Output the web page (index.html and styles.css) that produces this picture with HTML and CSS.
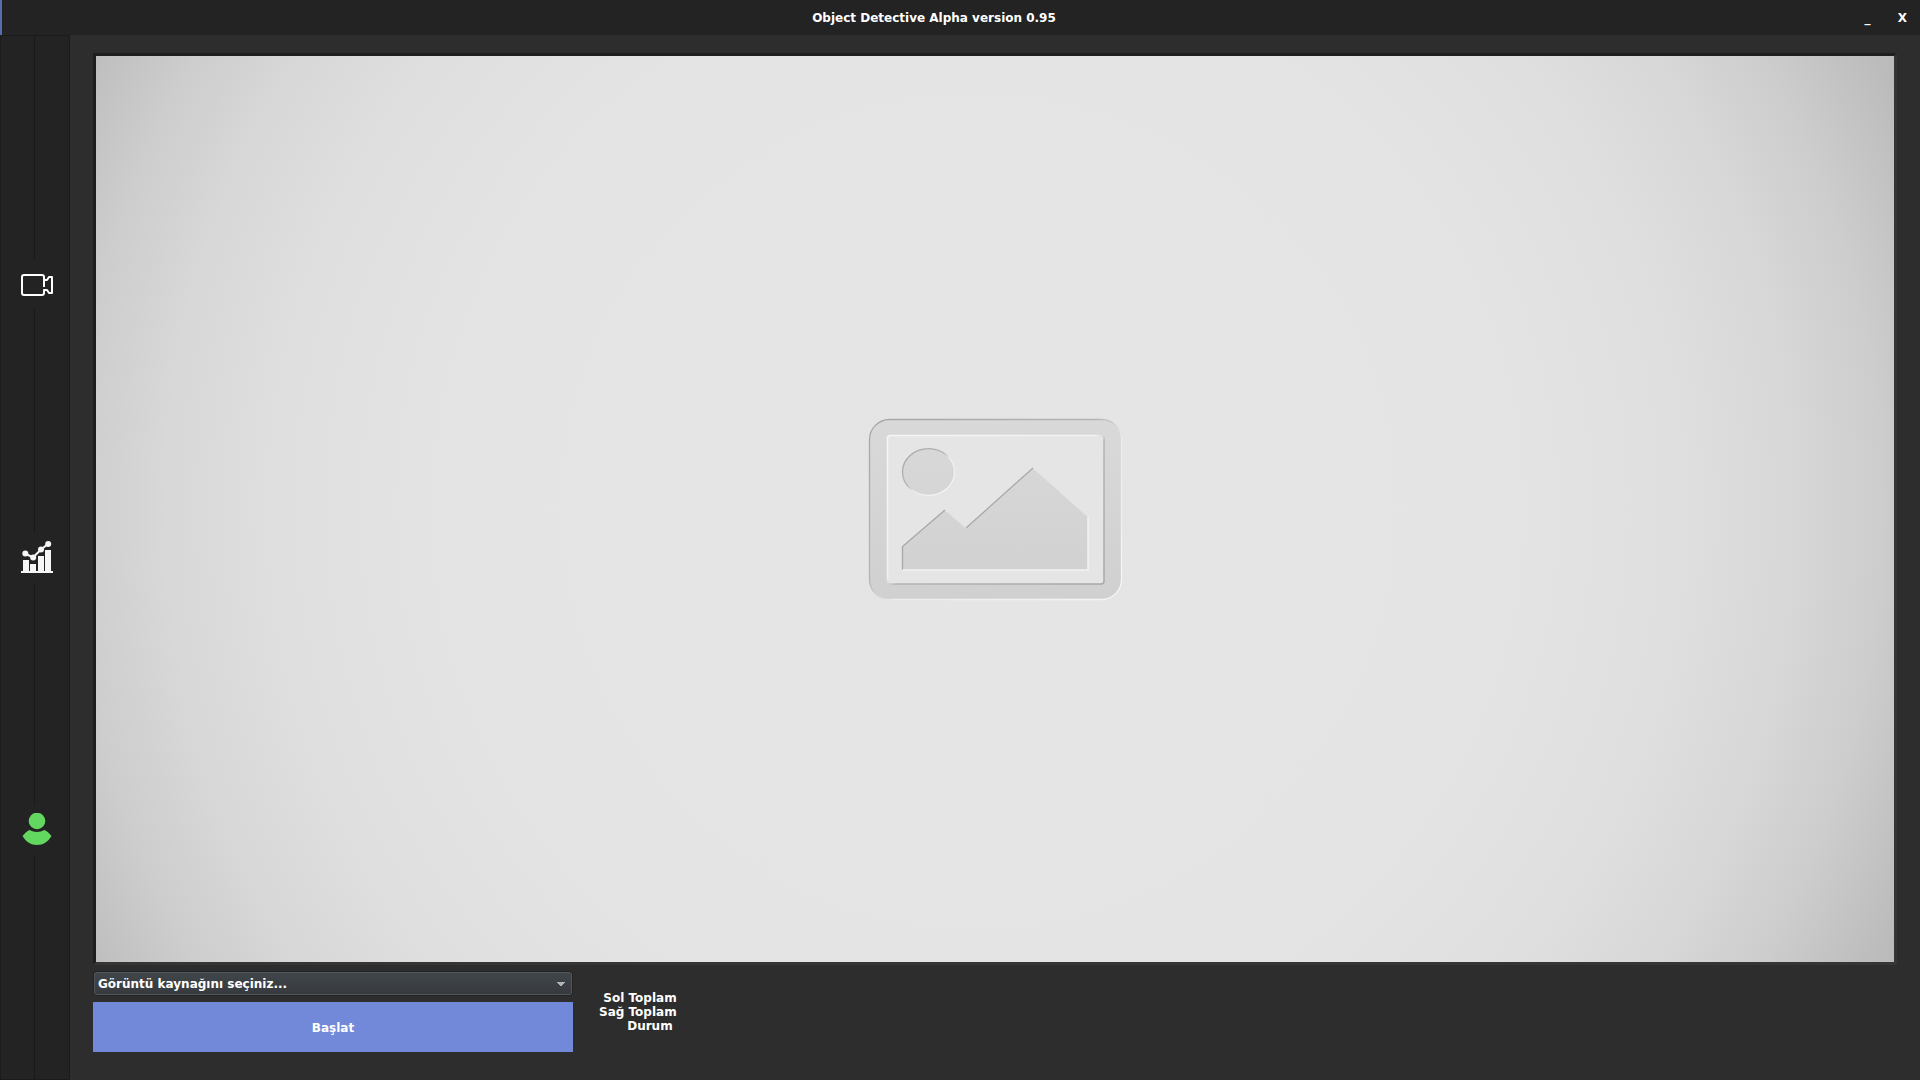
FILE: index.html
```html
<!DOCTYPE html>
<html lang="tr">
<head>
<meta charset="utf-8">
<title>Object Detective</title>
<link rel="stylesheet" href="styles.css">
</head>
<body>
<div class="window">
  <header class="titlebar">
    <h1 class="title">Object Detective Alpha version 0.95</h1>
    <button class="winbtn" type="button">_</button>
    <button class="winbtn" type="button">X</button>
  </header>
  <div class="body">
    <nav class="sidebar">
      <span class="line"></span>
      <button class="nav" type="button" aria-label="Kamera">
        <svg width="36" height="36" viewBox="0 -3 36 36" fill="none" stroke="#fff" stroke-width="2" stroke-linejoin="round">
          <path d="M25 12V8a2 2 0 0 0-2-2H5a2 2 0 0 0-2 2v16a2 2 0 0 0 2 2h18a2 2 0 0 0 2-2v-3h3l2 3h3V8h-3l-2 3h-3v7"/>
        </svg>
      </button>
      <span class="line"></span>
      <button class="nav" type="button" aria-label="İstatistik">
        <svg width="36" height="36" viewBox="0 1 36 36" fill="#f6f6f6">
          <path d="M2 32h32v2H2zM4 21h6v12H4zM11 25h6v8h-6zM19 17h6v16h-6zM26 11h6v22h-6z"/>
          <path d="M6 14.500l8 4 8-8 7-5.500" fill="none" stroke="#f6f6f6" stroke-width="2"/>
          <circle cx="6.300" cy="14.500" r="3"/><circle cx="14.200" cy="18.500" r="3"/><circle cx="22" cy="10.500" r="3"/><circle cx="29.200" cy="5" r="3"/>
        </svg>
      </button>
      <span class="line"></span>
      <button class="nav" type="button" aria-label="Kullanıcı">
        <svg width="36" height="36" viewBox="0 2 36 36" fill="#63d860">
          <circle cx="18" cy="10" r="8.300"/>
          <path d="M3.500 25C6 22 8 20 10.500 19Q18 23 25.500 19C28 20 30 22 32.500 25C29 31 24 34 18 34S7 31 3.500 25z"/>
        </svg>
      </button>
      <span class="line"></span>
    </nav>
    <main class="content">
      <div class="preview">
        <svg class="placeholder" width="256" height="184" viewBox="0 -1 256 184">
          <defs>
            <linearGradient id="fill" gradientUnits="userSpaceOnUse" x1="0" y1="0" x2="0" y2="184"><stop offset="0" stop-color="#d9d9d9"/><stop offset="1" stop-color="#d0d0d0"/></linearGradient>
            <linearGradient id="rim" x1="0" y1="0" x2="1" y2="1"><stop offset="0" stop-color="#a6a6a6"/><stop offset=".45" stop-color="#b4b4b4"/><stop offset=".55" stop-color="#ececec"/><stop offset="1" stop-color="#f6f6f6"/></linearGradient>
            <linearGradient id="rimIn" x1="0" y1="0" x2="1" y2="1"><stop offset="0" stop-color="#f6f6f6"/><stop offset=".48" stop-color="#f2f2f2"/><stop offset=".52" stop-color="#b4b4b4"/><stop offset="1" stop-color="#a8a8a8"/></linearGradient>
          </defs>
          <rect x="2.500" y="1.500" width="252" height="180" rx="20" fill="url(#fill)" stroke="url(#rim)" stroke-width="1.300"/>
          <rect x="20.500" y="17.500" width="216.500" height="148.500" rx="3" fill="#e5e5e5" stroke="url(#rimIn)" stroke-width="1.500"/>
          <ellipse cx="61.500" cy="54" rx="26" ry="23.300" fill="url(#fill)" stroke="url(#rim)" stroke-width="1.300"/>
          <path d="M35.500 152V128.500L78 92l21 18 67-60 55 49v53z" fill="url(#fill)"/>
          <path d="M35.500 152V128.500L78 92M99 110l67-60" fill="none" stroke="#a8a8a8" stroke-width="1.300"/>
          <path d="M78 92l21 18M166 50l55 49" fill="none" stroke="#e2e2e2"/>
          <path d="M35.500 152h185.500V99" fill="none" stroke="#f2f2f2" stroke-width="1.500"/>
        </svg>
      </div>
      <div class="controls">
        <div class="source">
          <select class="combo" aria-label="Görüntü kaynağı"><option>Görüntü kaynağını seçiniz...</option></select>
          <button class="start" type="button">Başlat</button>
        </div>
        <div class="totals">
          <span>Sol Toplam</span>
          <span>Sağ Toplam</span>
          <span class="status">Durum</span>
        </div>
      </div>
    </main>
  </div>
</div>
</body>
</html>
```
FILE: styles.css
```css
* { box-sizing: border-box; }
body {
  margin: 0;
  background: #2d2d2d;
  color: #fff;
  font: bold 12px/14px "DejaVu Sans", sans-serif;
}
button, select { font: inherit; color: inherit; border: 0; padding: 0; margin: 0; }
.window { display: flex; flex-direction: column; min-height: 100vh; }
.titlebar {
  display: flex;
  align-items: stretch;
  height: 35px;
  background: #232323;
  border-left: 2px solid #5a6cb0;
}
.title { flex: 1; margin: 0; padding-left: 16px; font-size: 12px; line-height: 37px; text-align: center; }
.winbtn { width: 35px; background: transparent; }
.body { flex: 1; display: flex; }
.sidebar {
  width: 70px;
  display: flex;
  flex-direction: column;
  background: #232323;
  border: 1px solid #1b1b1b;
}
.line { flex: 1; width: 34px; border-right: 1px solid #191919; }
.nav { display: flex; align-items: center; justify-content: center; height: 50px; padding-left: 4px; background: transparent; }
.content { flex: 1; display: flex; flex-direction: column; padding: 18px 23px 28px; }
.preview {
  flex: 1;
  display: flex;
  align-items: center;
  justify-content: center;
  border: 3px solid;
  border-color: #1e1e1e #353535 #353535 #1e1e1e;
  background: radial-gradient(circle at 49% 50%, #e5e5e5 0, #e4e4e4 520px, #e0e0e0 680px, #d8d8d8 810px, #cdcdcd 905px, #bbbbbb 1010px);
}
.controls { display: flex; gap: 26px; padding-top: 7px; }
.source { width: 480px; display: flex; flex-direction: column; gap: 7px; }
.combo {
  appearance: none;
  height: 23px;
  margin: 0 1px;
  padding: 0 3px;
  border: 1px solid #51565a;
  border-radius: 2px;
  outline: 1px solid #232323;
  background: conic-gradient(from -45deg at 50% 100%, #b4b4b4 90deg, transparent 0) right 6px top 9px / 8px 4px no-repeat, linear-gradient(#40464a, #37393d);
}
.start { height: 50px; padding-top: 2px; background: #7289da; }
.totals { display: flex; flex-direction: column; align-items: flex-end; padding-top: 19px; }
.status { padding-right: 4px; }
```
